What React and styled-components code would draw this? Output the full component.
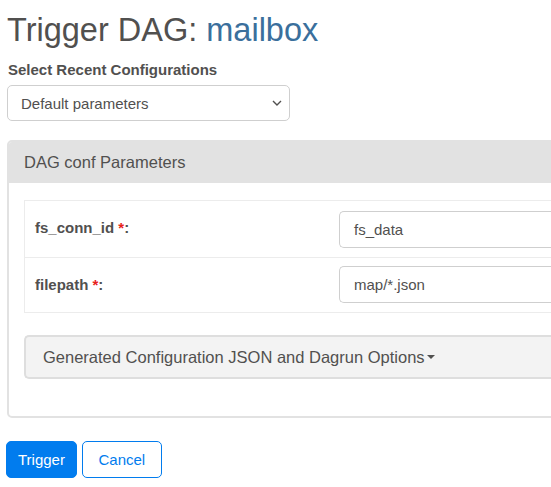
import styled, { createGlobalStyle } from "styled-components";

const GlobalStyle = createGlobalStyle`
  body {
    margin: 0;
    font-family: "Liberation Sans", Arial, sans-serif;
    color: #51504f;
    background: #fff;
    overflow: hidden;
  }
`;

const Page = styled.div`
  padding: 0 7px;
  width: 760px;
`;

const Title = styled.h1`
  font-size: 32.5px;
  font-weight: 400;
  line-height: 36px;
  margin: 12px 0 0;
  color: #51504f;
`;

const DagLink = styled.span`
  color: #3a6f9c;
`;

const FieldLabel = styled.div`
  font-size: 15px;
  font-weight: 700;
  margin: 13px 0 0 1px;
  line-height: 18px;
`;

const SelectBox = styled.div`
  display: flex;
  align-items: center;
  justify-content: space-between;
  box-sizing: border-box;
  width: 283px;
  height: 36px;
  margin-top: 6px;
  padding: 0 7px 0 13px;
  border: 1px solid #cfcfcf;
  border-radius: 5px;
  font-size: 15px;
  color: #51504f;
`;

const Panel = styled.div`
  margin-top: 19px;
  border: 2px solid #e2e2e2;
  border-radius: 5px;
  overflow: hidden;
`;

const PanelHeading = styled.div`
  display: flex;
  align-items: center;
  height: 41px;
  padding-left: 15px;
  background: #e2e2e2;
  font-size: 16.5px;
`;

const PanelBody = styled.div`
  padding: 17px 0 37px 15px;
`;

const ParamTable = styled.div`
  border: 1px solid #ececec;
  border-right: none;
`;

const ParamRow = styled.div`
  display: grid;
  grid-template-columns: 314px 1fr;
  height: ${(p) => p.$h}px;
  box-sizing: border-box;
  border-top: ${(p) => (p.$first ? "none" : "1px solid #ececec")};
`;

const ParamName = styled.div`
  padding: 18px 0 0 10px;
  font-size: 15px;
  font-weight: 700;
  line-height: 18px;
`;

const Required = styled.span`
  color: #e8211a;
`;

const ParamCell = styled.div`
  padding-top: ${(p) => p.$top}px;
`;

const TextInput = styled.div`
  display: flex;
  align-items: center;
  box-sizing: border-box;
  height: 37px;
  padding-left: 14px;
  border: 1px solid #cfcfcf;
  border-right: none;
  border-radius: 5px 0 0 5px;
  font-size: 15px;
`;

const Collapser = styled.div`
  display: flex;
  align-items: center;
  margin-top: 22px;
  height: 44px;
  box-sizing: border-box;
  padding-left: 17px;
  background: #f3f3f3;
  border: 2px solid #dedede;
  border-right: none;
  border-radius: 5px 0 0 5px;
  font-size: 16.5px;
`;

const Caret = styled.span`
  display: inline-block;
  margin-left: 2px;
  width: 0;
  height: 0;
  border-left: 4px solid transparent;
  border-right: 4px solid transparent;
  border-top: 4px solid #51504f;
`;

const Actions = styled.div`
  display: flex;
  gap: 5px;
  margin-top: 23px;
  margin-left: -1px;
`;

const Button = styled.div`
  display: flex;
  align-items: center;
  justify-content: center;
  box-sizing: border-box;
  height: 37px;
  padding: 0 ${(p) => (p.$primary ? 11 : 15.5)}px;
  border: 1px solid #017cee;
  border-radius: 5px;
  font-size: 15px;
  background: ${(p) => (p.$primary ? "#017cee" : "#fff")};
  color: ${(p) => (p.$primary ? "#fff" : "#017cee")};
`;

const Chevron = () => (
  <svg width="10" height="6" viewBox="0 0 10 6">
    <path d="M1 1l4 4 4-4" fill="none" stroke="#51504f" strokeWidth="1.4" />
  </svg>
);

const params = [
  { name: "fs_conn_id", value: "fs_data", h: 56, top: 10 },
  { name: "filepath", value: "map/*.json", h: 55, top: 8 },
];

export default function App() {
  return (
    <>
      <GlobalStyle />
      <Page>
        <Title>
          Trigger DAG: <DagLink>mailbox</DagLink>
        </Title>
        <FieldLabel>Select Recent Configurations</FieldLabel>
        <SelectBox>
          <span>Default parameters</span>
          <Chevron />
        </SelectBox>
        <Panel>
          <PanelHeading>DAG conf Parameters</PanelHeading>
          <PanelBody>
            <ParamTable>
              {params.map((p, i) => (
                <ParamRow key={p.name} $h={p.h} $first={i === 0}>
                  <ParamName>
                    {p.name} <Required>*</Required>:
                  </ParamName>
                  <ParamCell $top={p.top}>
                    <TextInput>{p.value}</TextInput>
                  </ParamCell>
                </ParamRow>
              ))}
            </ParamTable>
            <Collapser>
              Generated Configuration JSON and Dagrun Options
              <Caret />
            </Collapser>
          </PanelBody>
        </Panel>
        <Actions>
          <Button $primary>Trigger</Button>
          <Button>Cancel</Button>
        </Actions>
      </Page>
    </>
  );
}
